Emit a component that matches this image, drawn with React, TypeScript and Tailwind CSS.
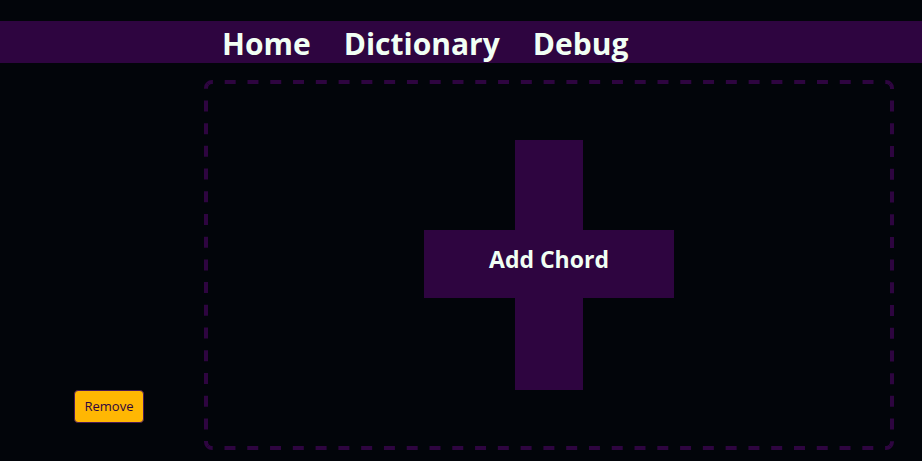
// dashed outline sides, corner-centre to corner-centre, so every corner gets a solid dash
const sides = [
  { d: 'M3.757 3.757A6 6 0 0 1 8 2H682A6 6 0 0 1 686.243 3.757', dash: '11 11.78' },
  { d: 'M686.243 3.757A6 6 0 0 1 688 8V362A6 6 0 0 1 686.243 366.243', dash: '11 11.71' },
  { d: 'M686.243 366.243A6 6 0 0 1 682 368H8A6 6 0 0 1 3.757 366.243', dash: '11 11.78' },
  { d: 'M3.757 366.243A6 6 0 0 1 2 362V8A6 6 0 0 1 3.757 3.757', dash: '11 11.71' },
];

export default function App() {
  return (
    <div className="flex h-[461px] w-[922px] flex-col overflow-hidden bg-[#02050a] pt-[21px] font-['Open_Sans',sans-serif]">
      <nav className="flex h-[42px] items-center gap-[33px] bg-[#2e0540] pl-[222px] pt-[4px] text-[30px] font-bold leading-none text-[#f1fff4]">
        <a href="#">Home</a>
        <a href="#">Dictionary</a>
        <a href="#">Debug</a>
      </nav>

      <main className="flex flex-1 pt-[17px] pb-[11px] pr-[28px]">
        <aside className="flex w-[204px] shrink-0 items-end pb-[27px] pl-[74px]">
          <button className="h-[33px] w-[70px] rounded-[4px] border border-[#4a1a55] bg-[#ffb703] text-[13px] text-[#2e0540]">
            Remove
          </button>
        </aside>

        <section className="relative flex flex-1 items-center justify-center">
          <svg className="pointer-events-none absolute inset-0 h-full w-full" viewBox="0 0 690 370" preserveAspectRatio="none">
            {sides.map((s) => (
              <path
                key={s.d}
                d={s.d}
                fill="none"
                stroke="#2e0540"
                strokeWidth="4"
                strokeDasharray={s.dash}
                strokeDashoffset="5.5"
              />
            ))}
          </svg>
          <button className="grid grid-cols-[91px_68px_91px] grid-rows-[90px_68px_92px]">
            <span className="col-start-2 row-start-1 bg-[#2e0540]" />
            <span className="col-span-3 row-start-2 flex items-center justify-center bg-[#2e0540] pb-[10px] text-[23px] font-bold text-[#f1fff4]">
              Add Chord
            </span>
            <span className="col-start-2 row-start-3 bg-[#2e0540]" />
          </button>
        </section>
      </main>
    </div>
  );
}
